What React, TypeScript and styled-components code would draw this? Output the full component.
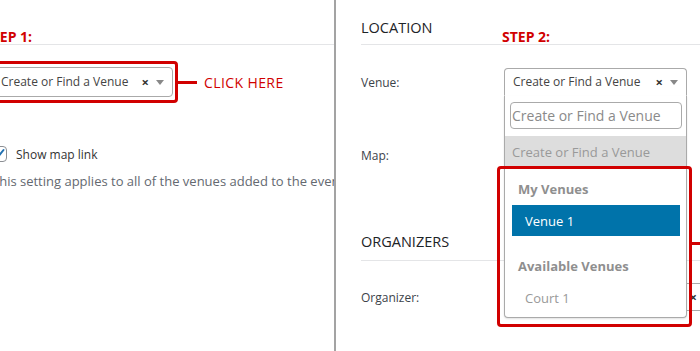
import React from "react";
import styled, { createGlobalStyle } from "styled-components";

const RED = "#d10000";

const GlobalStyle = createGlobalStyle`
  html, body { margin: 0; padding: 0; background: #fff; }
  body {
    font-family: "Open Sans", "Noto Sans", sans-serif;
    color: #333;
    overflow: hidden;
  }
  * { box-sizing: border-box; }
`;

const Page = styled.div`
  display: flex;
  width: 700px;
  height: 351px;
  overflow: hidden;
  background: #fff;
`;

const LeftPanel = styled.div`
  width: 334px;
  flex: none;
  overflow: hidden;
`;

const LeftInner = styled.div`
  margin-left: -13px;
  width: 460px;
  display: flex;
  flex-direction: column;
`;

const PanelDivider = styled.div`
  width: 2px;
  flex: none;
  background: #a3a3a3;
`;

const RightPanel = styled.div`
  flex: 1;
  overflow: hidden;
  padding-left: 25px;
  display: flex;
  flex-direction: column;
`;

const StepLabel = styled.div<{ $shift?: number; $top?: number }>`
  font-size: 14px;
  font-weight: 700;
  color: ${RED};
  line-height: 14px;
  white-space: nowrap;
  margin-left: ${(p) => p.$shift ?? 0}px;
  margin-top: ${(p) => p.$top ?? 0}px;
`;

const Rule = styled.div`
  height: 1px;
  background: #e4e5e7;
  flex: none;
`;

const HighlightRow = styled.div`
  display: flex;
  align-items: center;
  margin-top: 16px;
`;

const RedFrame = styled.div`
  border: 3px solid ${RED};
  border-radius: 4px;
  padding: 3px 2px;
  display: flex;
`;

const Connector = styled.div`
  width: 19px;
  height: 3px;
  background: ${RED};
`;

const Callout = styled.span`
  margin-left: 7px;
  font-size: 14px;
  letter-spacing: 0.4px;
  color: ${RED};
  white-space: nowrap;
`;

const SelectBox = styled.div<{ $width: number; $height: number; $open?: boolean }>`
  width: ${(p) => p.$width}px;
  min-width: ${(p) => p.$width}px;
  height: ${(p) => p.$height}px;
  border: 1px solid #aaa;
  border-bottom-color: ${(p) => (p.$open ? "transparent" : "#aaa")};
  border-radius: ${(p) => (p.$open ? "4px 4px 0 0" : "4px")};
  background: #fff;
  display: flex;
  align-items: center;
  padding: 0 8px 0 8px;
  font-size: 12px;
  color: #444;
`;

const SelectText = styled.span`
  flex: 1;
  white-space: nowrap;
  overflow: hidden;
  line-height: 18px;
`;

const ClearMark = styled.span`
  font-size: 13px;
  font-weight: 700;
  color: #333;
  line-height: 18px;
  margin-right: 7px;
`;

const Caret = styled.span`
  width: 0;
  height: 0;
  border-left: 4px solid transparent;
  border-right: 4px solid transparent;
  border-top: 5px solid #888;
`;

const CheckRow = styled.div`
  display: flex;
  align-items: center;
  margin-top: 43px;
  margin-left: 4px;
  height: 16px;
`;

const CheckBox = styled.span`
  width: 16px;
  height: 16px;
  flex: none;
  border: 1px solid #8c8f94;
  border-radius: 4px;
  background: #fff;
  display: flex;
  align-items: center;
  justify-content: center;
`;

const CheckText = styled.span`
  margin-left: 9px;
  font-size: 12px;
  line-height: 16px;
  padding-top: 2px;
  color: #333;
  white-space: nowrap;
`;

const Description = styled.p`
  margin: 10px 0 0 5px;
  font-size: 13px;
  line-height: 18px;
  color: #646970;
  white-space: nowrap;
`;

const HeaderRow = styled.div<{ $height: number }>`
  display: grid;
  grid-template-columns: 143px 1fr;
  align-items: end;
  height: ${(p) => p.$height}px;
  flex: none;
`;

const SectionTitle = styled.div<{ $gap: number }>`
  font-size: 14.5px;
  font-weight: 500;
  line-height: 16px;
  color: #1d2327;
  white-space: nowrap;
  margin-bottom: ${(p) => p.$gap}px;
`;

const FieldRow = styled.div<{ $top: number; $height: number }>`
  display: grid;
  grid-template-columns: 143px 1fr;
  align-items: center;
  margin-top: ${(p) => p.$top}px;
  height: ${(p) => p.$height}px;
  flex: none;
`;

const FieldLabel = styled.span`
  font-size: 12px;
  line-height: 16px;
  padding-top: 2px;
  color: #3c434a;
`;

const FieldCell = styled.div`
  position: relative;
  display: flex;
  align-items: center;
  justify-self: start;
`;

const Dropdown = styled.div`
  position: absolute;
  top: 100%;
  left: 0;
  width: 183px;
  border: 1px solid #aaa;
  border-top: none;
  border-radius: 0 0 4px 4px;
  background: #fff;
  box-shadow: 0 1px 2px rgba(0, 0, 0, 0.12);
  padding: 6px 0 4px;
  z-index: 2;
`;

const SearchInput = styled.input`
  display: block;
  width: 172px;
  height: 27px;
  margin: 0 4px 7px 5px;
  border: 1px solid #aaa;
  border-radius: 4px;
  padding: 0 1px;
  font-family: inherit;
  font-size: 14px;
  color: #444;
  outline: none;
  background: #fff;
  &::placeholder {
    color: #8a8a8a;
  }
`;

const OptionRow = styled.div<{ $variant: "placeholder" | "selected" | "disabled" }>`
  height: 31px;
  display: flex;
  align-items: center;
  font-size: 13px;
  white-space: nowrap;
  padding-left: ${(p) => (p.$variant === "placeholder" ? 7 : 13)}px;
  margin: ${(p) => (p.$variant === "placeholder" ? "0" : "0 6px 0 7px")};
  background: ${(p) =>
    p.$variant === "placeholder" ? "#ddd" : p.$variant === "selected" ? "#0073aa" : "transparent"};
  color: ${(p) => (p.$variant === "selected" ? "#fff" : "#999")};
`;

const OptionGroup = styled.div<{ $bottom: number }>`
  padding-bottom: ${(p) => p.$bottom}px;
`;

const GroupLabel = styled.div`
  padding: 13px 0 7px 13px;
  font-size: 13px;
  line-height: 18px;
  font-weight: 700;
  color: #8f8f8f;
  white-space: nowrap;
`;

const AnnotationBox = styled.div`
  position: absolute;
  left: -8px;
  top: 70px;
  width: 195px;
  height: 161px;
  border: 3px solid ${RED};
  border-radius: 4px;
  pointer-events: none;
  &::after {
    content: "";
    position: absolute;
    left: calc(100% + 3px);
    top: 73px;
    width: 12px;
    height: 3px;
    background: ${RED};
  }
`;

const CheckIcon = () => (
  <svg width="14" height="14" viewBox="0 0 14 14">
    <path d="M2.5 7.5 L5.5 10.5 L11.5 3" fill="none" stroke="#2271b1" strokeWidth="2" strokeLinecap="round" strokeLinejoin="round" />
  </svg>
);

const VenueSelect = ({ width, height, open }: { width: number; height: number; open?: boolean }) => (
  <SelectBox $width={width} $height={height} $open={open}>
    <SelectText>Create or Find a Venue</SelectText>
    <ClearMark>×</ClearMark>
    <Caret />
  </SelectBox>
);

export default function App() {
  return (
    <>
      <GlobalStyle />
      <Page>
        <LeftPanel>
          <LeftInner>
            <StepLabel $shift={-3} $top={30}>
              STEP 1:
            </StepLabel>
            <Rule />
            <HighlightRow>
              <RedFrame>
                <VenueSelect width={181} height={30} />
              </RedFrame>
              <Connector />
              <Callout>CLICK HERE</Callout>
            </HighlightRow>
            <CheckRow>
              <CheckBox>
                <CheckIcon />
              </CheckBox>
              <CheckText>Show map link</CheckText>
            </CheckRow>
            <Description>This setting applies to all of the venues added to the event.</Description>
          </LeftInner>
        </LeftPanel>
        <PanelDivider />
        <RightPanel>
          <HeaderRow $height={44}>
            <SectionTitle $gap={8}>LOCATION</SectionTitle>
            <StepLabel $shift={-2}>STEP 2:</StepLabel>
          </HeaderRow>
          <Rule />
          <FieldRow $top={23} $height={28}>
            <FieldLabel>Venue:</FieldLabel>
            <FieldCell>
              <VenueSelect width={183} height={28} open />
              <Dropdown>
                <SearchInput placeholder="Create or Find a Venue" readOnly />
                <OptionRow $variant="placeholder">Create or Find a Venue</OptionRow>
                <OptionGroup $bottom={8}>
                  <GroupLabel>My Venues</GroupLabel>
                  <OptionRow $variant="selected">Venue 1</OptionRow>
                </OptionGroup>
                <OptionGroup $bottom={0}>
                  <GroupLabel>Available Venues</GroupLabel>
                  <OptionRow $variant="disabled">Court 1</OptionRow>
                </OptionGroup>
                <AnnotationBox />
              </Dropdown>
            </FieldCell>
          </FieldRow>
          <FieldRow $top={50} $height={16}>
            <FieldLabel>Map:</FieldLabel>
            <FieldCell>
              <CheckBox>
                <CheckIcon />
              </CheckBox>
            </FieldCell>
          </FieldRow>
          <HeaderRow $height={98}>
            <SectionTitle $gap={10}>ORGANIZERS</SectionTitle>
          </HeaderRow>
          <Rule />
          <FieldRow $top={22} $height={28}>
            <FieldLabel>Organizer:</FieldLabel>
            <FieldCell>
              <SelectBox $width={217} $height={28}>
                <SelectText />
                <ClearMark>×</ClearMark>
                <Caret />
              </SelectBox>
            </FieldCell>
          </FieldRow>
        </RightPanel>
      </Page>
    </>
  );
}
